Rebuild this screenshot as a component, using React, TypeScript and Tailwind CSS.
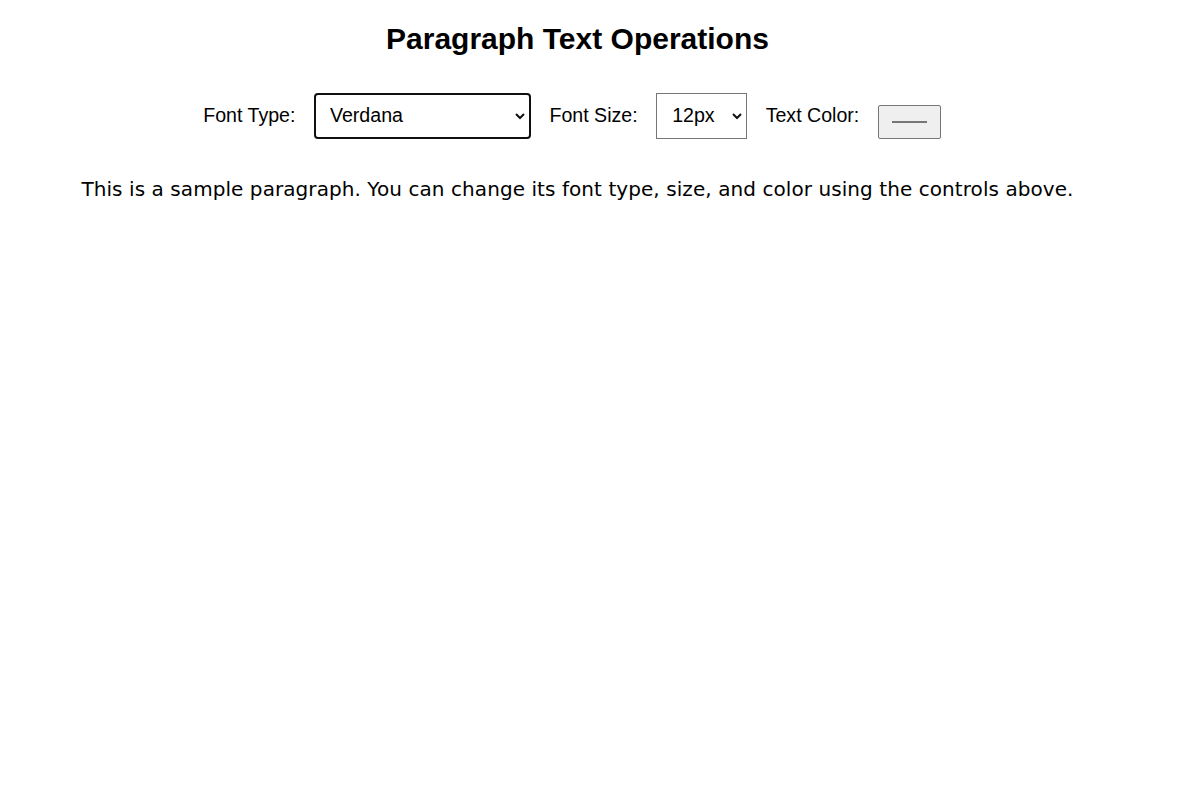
import { useState } from 'react'

const fonts = ['Verdana', 'Arial', 'Georgia', 'Times New Roman', 'Courier New']
const sizes = ['12px', '14px', '16px', '18px', '20px', '24px']

function Chevron() {
  return (
    <svg
      className="pointer-events-none absolute top-1/2 -translate-y-1/2"
      width="10"
      height="7"
      viewBox="0 0 10 7"
      fill="none"
    >
      <path d="M1 1.5l4 4 4-4" stroke="#111" strokeWidth="2" />
    </svg>
  )
}

export default function App() {
  const [font, setFont] = useState('Verdana')
  const [size, setSize] = useState('12px')

  return (
    <div className="w-[1155px] pt-[21px] text-center text-black font-['Liberation_Sans',Arial,sans-serif]">
      <h1 className="text-3xl font-bold">Paragraph Text Operations</h1>

      {/* controls */}
      <div className="mt-[36px] flex items-center justify-center gap-[18.5px] pr-[11px] text-[19.6px]">
        <label>Font Type:</label>
        <div className="relative">
          <select
            value={font}
            onChange={(e) => setFont(e.target.value)}
            className="block h-[46px] w-[217px] appearance-none rounded-[4px] border-2 border-[#101010] bg-white pl-[14px] text-left outline-none"
          >
            {fonts.map((f) => (
              <option key={f}>{f}</option>
            ))}
          </select>
          <span className="absolute right-[16px] top-0 h-full">
            <Chevron />
          </span>
        </div>

        <label>Font Size:</label>
        <div className="relative">
          <select
            value={size}
            onChange={(e) => setSize(e.target.value)}
            className="block h-[46px] w-[91px] appearance-none border border-[#767676] bg-white pl-[15px] text-left outline-none"
          >
            {sizes.map((s) => (
              <option key={s}>{s}</option>
            ))}
          </select>
          <span className="absolute right-[15px] top-0 h-full">
            <Chevron />
          </span>
        </div>

        <label>Text Color:</label>
        <button className="flex h-[34px] w-[63px] items-center justify-center self-end rounded-[2px] border border-[#767676] bg-[#efefef]">
          <span className="block h-[2px] w-[35px] bg-[#767676]" />
        </button>
      </div>

      <p className="mt-[39px] text-[20px] leading-[23px] tracking-[0.07px] font-['Verdana','DejaVu_Sans',sans-serif]">
        This is a sample paragraph. You can change its font type, size, and color using the controls above.
      </p>
    </div>
  )
}
